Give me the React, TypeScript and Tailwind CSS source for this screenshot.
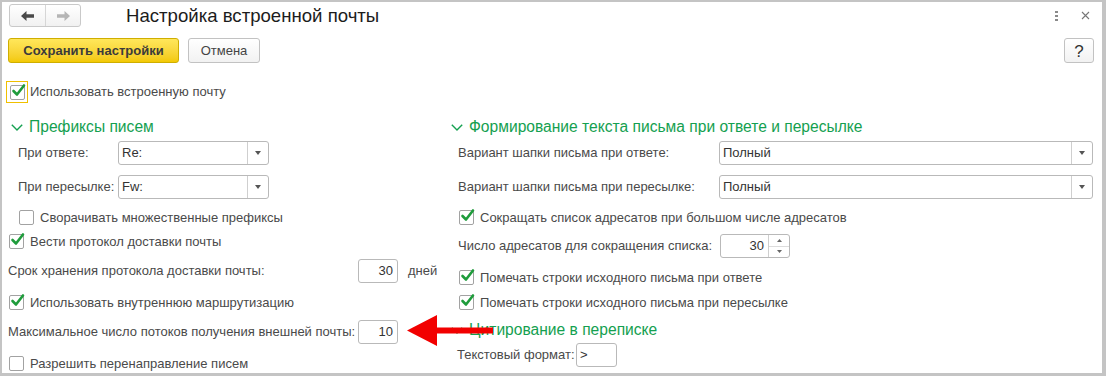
import React from 'react';

function Check({ checked }: { checked?: boolean }) {
  return (
    <span className="relative shrink-0 w-[15px] h-[15px] border border-[#a2a2a2] rounded-[2px] bg-white">
      {checked && (
        <svg width="15" height="14" viewBox="0 0 15 14" className="absolute left-[0px] top-[-3px]">
          <path d="M2.5 8 L6 11.5 L13 2.5" stroke="#1f9c3c" strokeWidth="2.6" fill="none" strokeLinecap="round" strokeLinejoin="round" />
        </svg>
      )}
    </span>
  );
}

function CheckRow({ checked, text, pl }: { checked?: boolean; text: string; pl: string }) {
  return (
    <div className={`flex items-center h-[15px] ${pl}`}>
      <Check checked={checked} />
      <span className="ml-[6px] leading-[15px] whitespace-nowrap">{text}</span>
    </div>
  );
}

function Chevron() {
  return (
    <svg width="12" height="7" viewBox="0 0 12 7" className="ml-[3px] shrink-0">
      <path d="M0.8 0.8 L6 6 L11.2 0.8" stroke="#14a050" strokeWidth="1.4" fill="none" />
    </svg>
  );
}

function GroupTitle({ text, mt }: { text: string; mt: string }) {
  return (
    <div className={`flex items-center h-[20px] ${mt}`}>
      <Chevron />
      <span className="ml-[6px] text-[15.6px] text-[#14a050] whitespace-nowrap">{text}</span>
    </div>
  );
}

function Combo({ value, w }: { value: string; w: string }) {
  return (
    <div className={`flex h-[24px] ${w} border border-[#b9b9b9] rounded-[3px] bg-white`}>
      <span className="flex-1 pl-[3px] leading-[22px] text-[#333]">{value}</span>
      <span className="w-[21px] border-l border-[#cfcfcf] flex items-center justify-center">
        <svg width="6" height="4" viewBox="0 0 6 4">
          <path d="M0 0 H6 L3 4 Z" fill="#555" />
        </svg>
      </span>
    </div>
  );
}

function NumBox({ value, w, left }: { value: string; w: string; left?: boolean }) {
  return (
    <div className={`h-[24px] ${w} border border-[#b9b9b9] rounded-[3px] bg-white leading-[22px] text-[#333] ${left ? 'pl-[3px]' : 'text-right pr-[4px]'}`}>
      {value}
    </div>
  );
}

export default function App() {
  return (
    <div className="relative w-[1106px] h-[376px] bg-white font-['Liberation_Sans',Arial,sans-serif] text-[13px] text-[#4a4a4a]">
      <div className="w-full h-full border-t-2 border-l-2 border-r-[4px] border-b-[3px] border-[#c4c4c4] flex flex-col">
        {/* title bar */}
        <div className="flex items-center h-[27px] pl-[7px] pr-[12px]">
          <div className="flex h-[23px] w-[72px] border border-[#c9c9c9] rounded-[3px] bg-linear-to-b from-white to-[#f1f1f1]">
            <span className="w-[36px] flex items-center justify-center border-r border-[#d6d6d6]">
              <svg width="13" height="10" viewBox="0 0 13 10">
                <path d="M0 5 L5.5 0 V3.3 H13 V6.7 H5.5 V10 Z" fill="#4a4a4a" />
              </svg>
            </span>
            <span className="flex-1 flex items-center justify-center">
              <svg width="13" height="10" viewBox="0 0 13 10">
                <path d="M13 5 L7.5 0 V3.3 H0 V6.7 H7.5 V10 Z" fill="#b5b5b5" />
              </svg>
            </span>
          </div>
          <span className="ml-[45px] text-[18.6px] text-[#1c1c1c] whitespace-nowrap">Настройка встроенной почты</span>
          <div className="ml-auto flex items-center">
            <span className="flex flex-col gap-[2px]">
              <span className="w-[3px] h-[2px] bg-[#8a8a8a]" />
              <span className="w-[3px] h-[2px] bg-[#8a8a8a]" />
              <span className="w-[3px] h-[2px] bg-[#8a8a8a]" />
            </span>
            <svg width="9" height="9" viewBox="0 0 9 9" className="ml-[23px]">
              <path d="M1 1 L8 8 M8 1 L1 8" stroke="#777" strokeWidth="1.1" />
            </svg>
          </div>
        </div>

        {/* command bar */}
        <div className="flex items-center h-[25px] mt-[9px] pl-[6px] pr-[8px]">
          <button className="h-[25px] w-[171px] rounded-[3px] border border-[#cfae00] bg-linear-to-b from-[#ffe75a] to-[#f3c900] font-bold text-[#3b3b3b]">
            Сохранить настройки
          </button>
          <button className="ml-[9px] h-[25px] w-[72px] rounded-[3px] border border-[#c2c2c2] bg-linear-to-b from-white to-[#f2f2f2] text-[#444]">
            Отмена
          </button>
          <button className="ml-auto h-[25px] w-[30px] rounded-[3px] border border-[#c2c2c2] bg-linear-to-b from-white to-[#f2f2f2] text-[17px] text-[#333]">
            ?
          </button>
        </div>

        {/* main checkbox */}
        <div className="flex items-center h-[22px] mt-[18px] pl-[4px]">
          <span className="w-[22px] h-[22px] border border-[#f0c000] flex items-center justify-center">
            <Check checked />
          </span>
          <span className="ml-[2px] whitespace-nowrap">Использовать встроенную почту</span>
        </div>

        {/* columns */}
        <div className="flex mt-[14px] pl-[6px]">
          <div className="w-[440px] flex flex-col">
            <GroupTitle text="Префиксы писем" mt="" />
            <div className="flex items-center h-[24px] mt-[4px] pl-[10px]">
              <span className="w-[100px]">При ответе:</span>
              <Combo value="Re:" w="w-[151px]" />
            </div>
            <div className="flex items-center h-[24px] mt-[10px] pl-[10px]">
              <span className="w-[100px]">При пересылке:</span>
              <Combo value="Fw:" w="w-[151px]" />
            </div>
            <div className="mt-[11px]">
              <CheckRow text="Сворачивать множественные префиксы" pl="pl-[11px]" />
            </div>
            <div className="mt-[9px]">
              <CheckRow checked text="Вести протокол доставки почты" pl="pl-[1px]" />
            </div>
            <div className="flex items-center h-[25px] mt-[9px]">
              <span className="w-[350px]">Срок хранения протокола доставки почты:</span>
              <NumBox value="30" w="w-[40px]" />
              <span className="ml-[10px]">дней</span>
            </div>
            <div className="mt-[12px]">
              <CheckRow checked text="Использовать внутреннюю маршрутизацию" pl="pl-[1px]" />
            </div>
            <div className="flex items-center h-[24px] mt-[10px]">
              <span className="w-[350px] whitespace-nowrap">Максимальное число потоков получения внешней почты:</span>
              <NumBox value="10" w="w-[40px]" />
            </div>
            <div className="mt-[12px]">
              <CheckRow text="Разрешить перенаправление писем" pl="pl-[1px]" />
            </div>
          </div>

          <div className="w-[645px] flex flex-col">
            <GroupTitle text="Формирование текста письма при ответе и пересылке" mt="" />
            <div className="flex items-center h-[24px] mt-[4px] pl-[10px]">
              <span className="w-[261px]">Вариант шапки письма при ответе:</span>
              <Combo value="Полный" w="w-[374px]" />
            </div>
            <div className="flex items-center h-[24px] mt-[10px] pl-[10px]">
              <span className="w-[261px]">Вариант шапки письма при пересылке:</span>
              <Combo value="Полный" w="w-[374px]" />
            </div>
            <div className="mt-[11px]">
              <CheckRow checked text="Сокращать список адресатов при большом числе адресатов" pl="pl-[11px]" />
            </div>
            <div className="flex items-center h-[24px] mt-[9px] pl-[10px]">
              <span className="w-[262px]">Число адресатов для сокращения списка:</span>
              <div className="flex h-[24px] w-[70px] border border-[#b9b9b9] rounded-[3px] bg-white">
                <span className="flex-1 text-right pr-[4px] leading-[22px] text-[#333]">30</span>
                <span className="w-[21px] border-l border-[#cfcfcf] flex flex-col">
                  <span className="flex-1 flex items-center justify-center">
                    <svg width="5" height="3" viewBox="0 0 5 3"><path d="M0 3 H5 L2.5 0 Z" fill="#666" /></svg>
                  </span>
                  <span className="h-px bg-[#dcdcdc]" />
                  <span className="flex-1 flex items-center justify-center">
                    <svg width="5" height="3" viewBox="0 0 5 3"><path d="M0 0 H5 L2.5 3 Z" fill="#666" /></svg>
                  </span>
                </span>
              </div>
            </div>
            <div className="mt-[12px]">
              <CheckRow checked text="Помечать строки исходного письма при ответе" pl="pl-[11px]" />
            </div>
            <div className="mt-[10px]">
              <CheckRow checked text="Помечать строки исходного письма при пересылке" pl="pl-[11px]" />
            </div>
            <GroupTitle text="Цитирование в переписке" mt="mt-[10px]" />
            <div className="flex items-center h-[24px] mt-[3px] pl-[9px]">
              <span className="w-[119px]">Текстовый формат:</span>
              <NumBox value=">" w="w-[41px]" left />
            </div>
          </div>
        </div>
      </div>

      {/* red pointer arrow */}
      <svg width="86" height="31" viewBox="0 0 86 31" className="absolute left-[407px] top-[315px]">
        <path d="M0 15.5 L30 0 V12.5 H86 V18.5 H30 V31 Z" fill="#f20000" />
      </svg>
    </div>
  );
}
